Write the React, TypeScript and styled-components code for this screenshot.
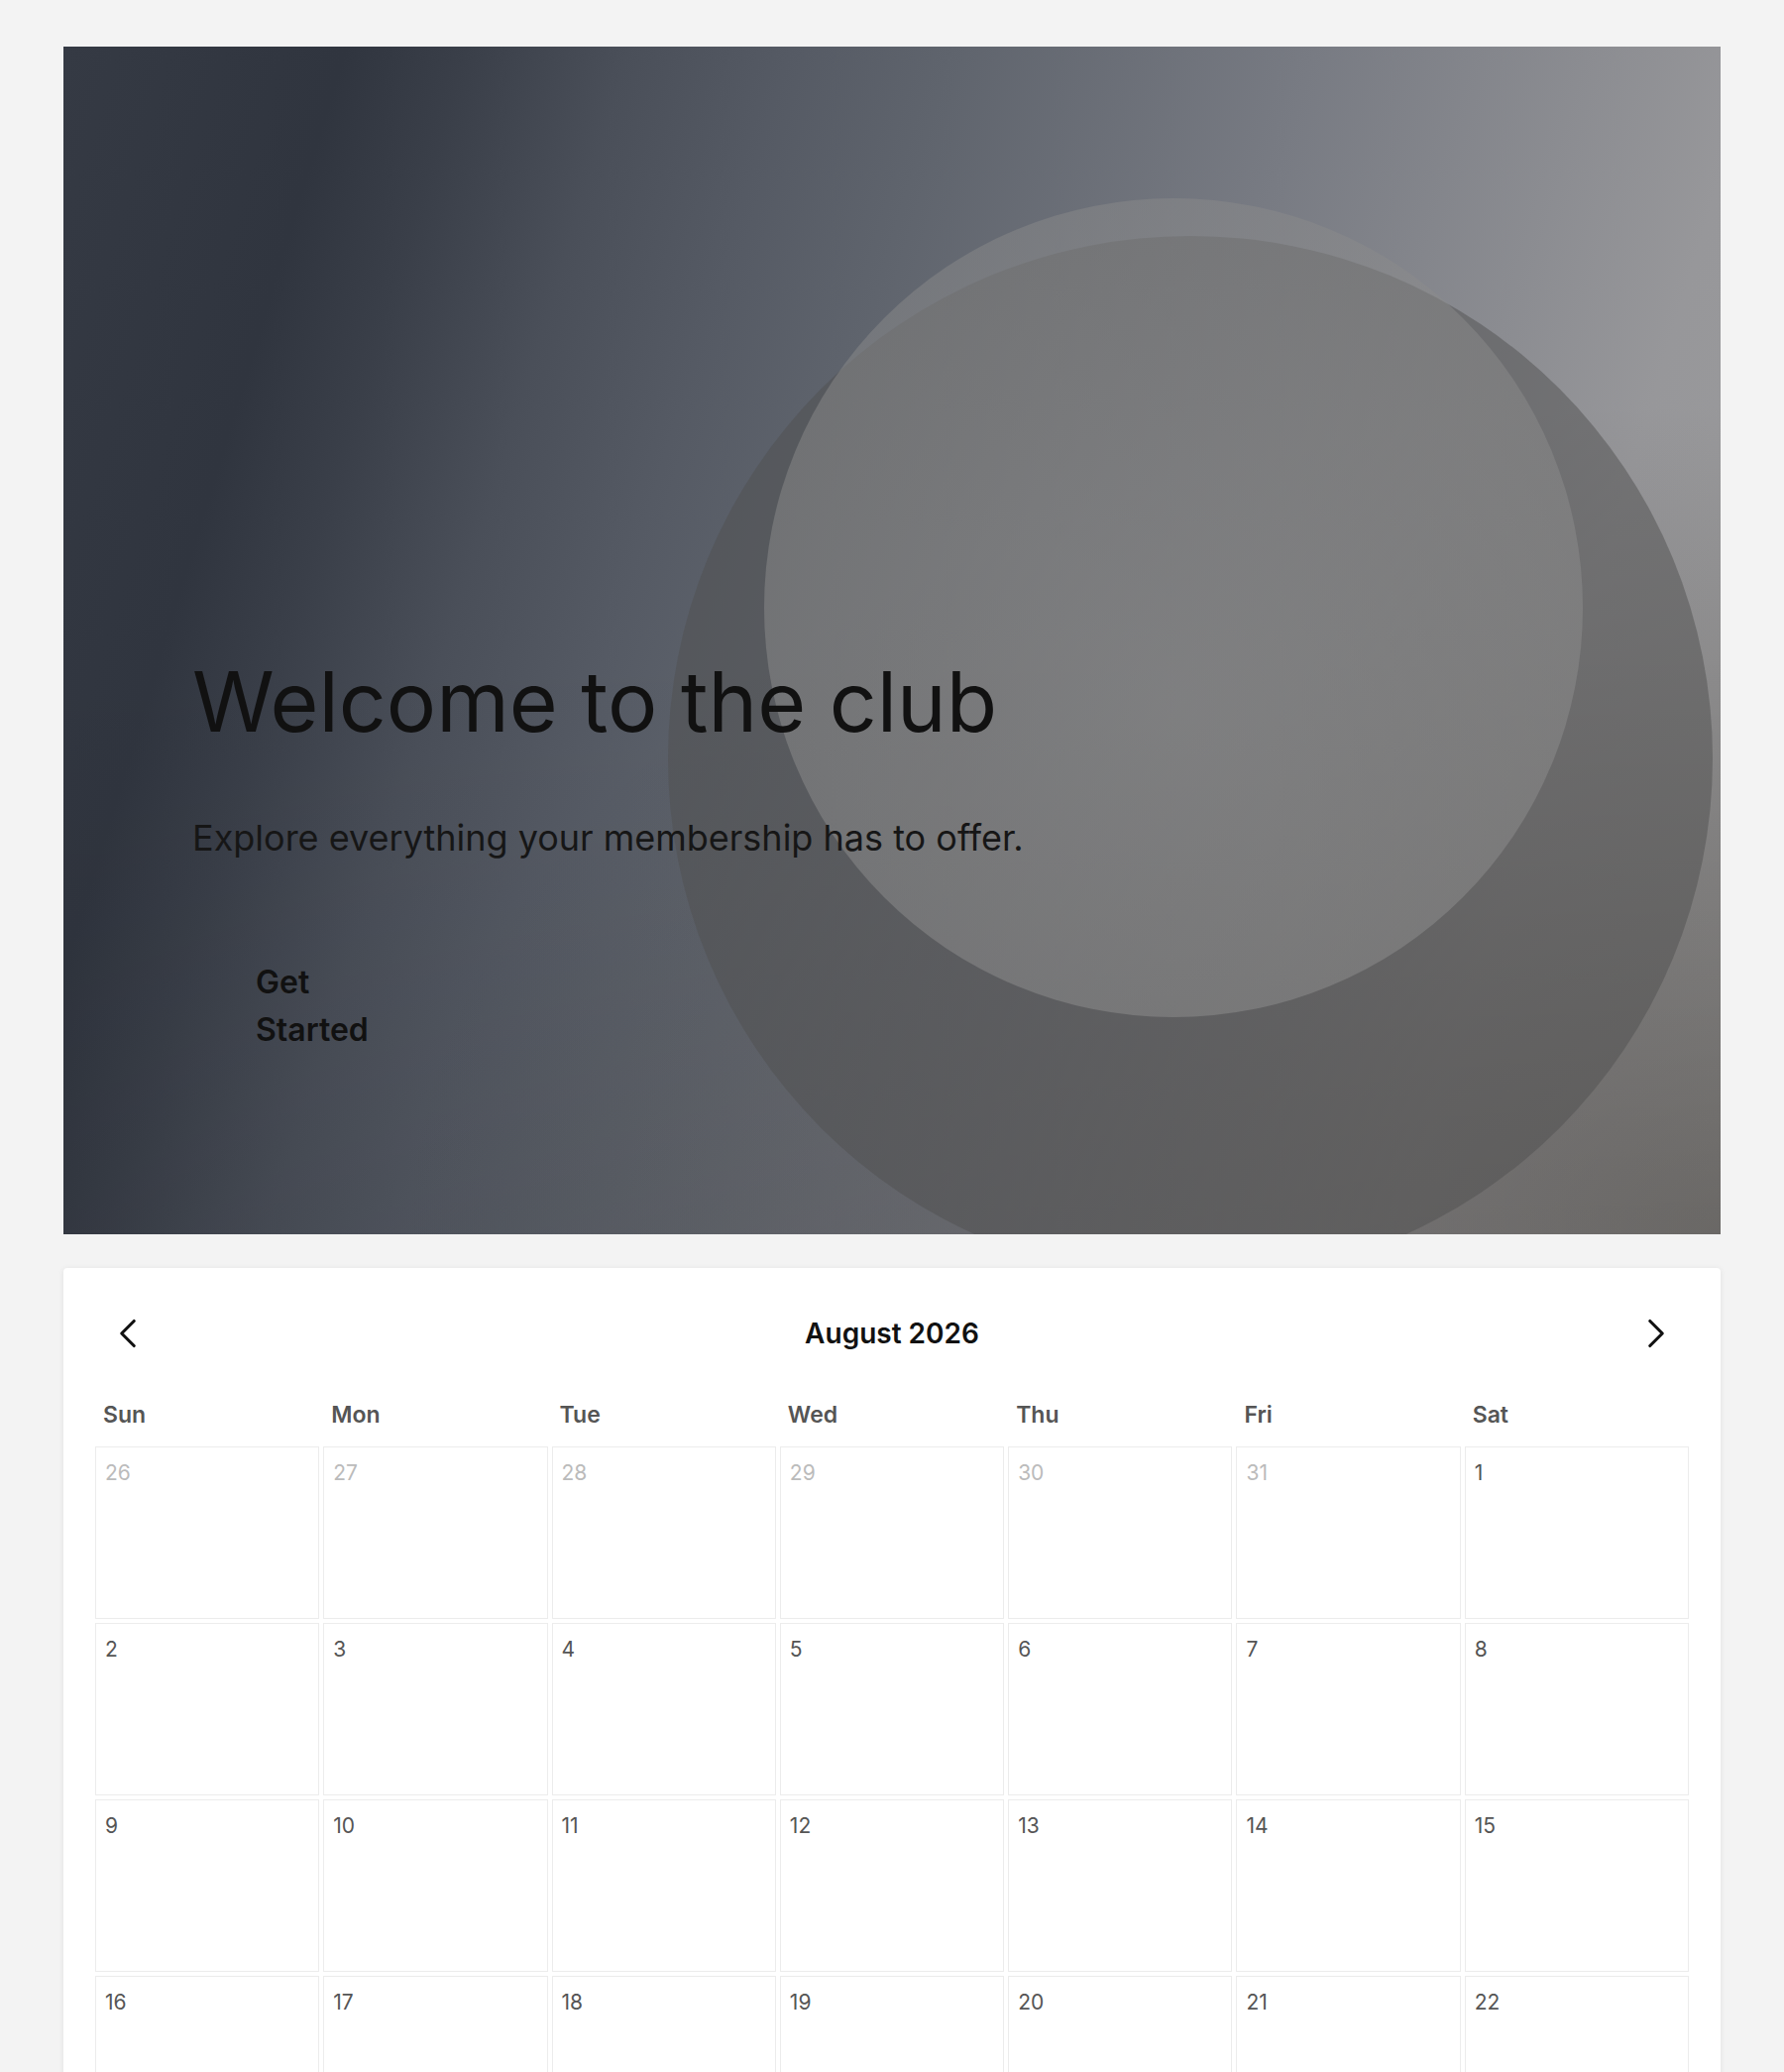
import React from "react";
import styled, { createGlobalStyle } from "styled-components";
import { ChevronLeft, ChevronRight } from "lucide-react";

const GlobalStyle = createGlobalStyle`
  * {
    box-sizing: border-box;
  }
  body {
    margin: 0;
    background: #f3f3f3;
    font-family: Inter, "Noto Sans", sans-serif;
    color: #111;
  }
`;

const Page = styled.main`
  display: flex;
  flex-direction: column;
  gap: 34px;
  padding: 47px 64px 64px;
`;

// hero banner with the two decorative circles behind the text
const Hero = styled.section`
  position: relative;
  overflow: hidden;
  height: 1198px;
  display: flex;
  flex-direction: column;
  justify-content: flex-end;
  padding: 0 130px 158px;
  background:
    radial-gradient(ellipse 80% 70% at 100% 100%, rgba(60, 55, 50, 0.45) 0%, rgba(60, 55, 50, 0) 100%),
    linear-gradient(to bottom, rgba(0, 0, 0, 0) 50%, rgba(0, 0, 0, 0.08) 100%),
    linear-gradient(
      107deg,
      #353a44 0%,
      #323741 8%,
      #30353f 14%,
      #3a3f49 20%,
      #4a4f59 28%,
      #555a64 36%,
      #5f646d 44%,
      #787b83 62%,
      #97979a 84%,
      #9c9c9c 100%
    );
`;

const Circle = styled.div<{ $size: number; $left: number; $top: number; $bg: string }>`
  position: absolute;
  left: ${(p) => p.$left}px;
  top: ${(p) => p.$top}px;
  width: ${(p) => p.$size}px;
  height: ${(p) => p.$size}px;
  border-radius: 50%;
  background: ${(p) => p.$bg};
  pointer-events: none;
`;

const HeroContent = styled.div`
  position: relative;
  z-index: 1;
  display: flex;
  flex-direction: column;
  align-items: flex-start;
`;

const Title = styled.h1`
  margin: 0;
  font-size: 84px;
  font-weight: 400;
  line-height: 1.1;
  color: #111;
`;

const Subtitle = styled.p`
  margin: 64px 0 0;
  font-size: 36px;
  line-height: 1.5;
  color: #161616;
`;

const CtaButton = styled.button`
  margin-top: 71px;
  width: min-content;
  padding: 24px 64px;
  border: none;
  background: transparent;
  font-family: inherit;
  font-size: 32px;
  font-weight: 600;
  line-height: 48px;
  color: #111;
  text-align: left;
  cursor: pointer;
`;

// calendar card
const Card = styled.section`
  background: #fff;
  border-radius: 4px;
  box-shadow: 0 1px 6px rgba(0, 0, 0, 0.08);
  padding: 33px 32px 32px;
`;

const CalendarHeader = styled.div`
  display: flex;
  align-items: center;
  justify-content: space-between;
  margin-bottom: 23px;
`;

const NavButton = styled.button`
  display: flex;
  align-items: center;
  justify-content: center;
  padding: 8px;
  border: none;
  background: none;
  color: #111;
  cursor: pointer;
`;

const MonthTitle = styled.h2`
  margin: 0;
  font-size: 28px;
  font-weight: 600;
  color: #111;
`;

const WeekRow = styled.div`
  display: grid;
  grid-template-columns: repeat(7, 1fr);
  gap: 4px;
`;

const Weekday = styled.div`
  padding: 8px;
  font-size: 23px;
  font-weight: 600;
  line-height: 36px;
  color: #555;
`;

const DaysGrid = styled.div`
  display: grid;
  grid-template-columns: repeat(7, 1fr);
  gap: 4px;
  margin-top: 6px;
`;

const DayCell = styled.div<{ $muted?: boolean }>`
  height: 174px;
  border: 1px solid #ececec;
  padding: 10px 9px;
  font-size: 21px;
  line-height: 1.5;
  color: ${(p) => (p.$muted ? "#bbb" : "#555")};
`;

const weekdays = ["Sun", "Mon", "Tue", "Wed", "Thu", "Fri", "Sat"];

// august 2026 starts on a saturday, pad with the end of july and start of september
function buildDays() {
  const days: { n: number; muted: boolean }[] = [];
  for (let d = 26; d <= 31; d++) days.push({ n: d, muted: true });
  for (let d = 1; d <= 31; d++) days.push({ n: d, muted: false });
  let next = 1;
  while (days.length % 7 !== 0) days.push({ n: next++, muted: true });
  return days;
}

function App() {
  const days = buildDays();

  return (
    <>
      <GlobalStyle />
      <Page>
        <Hero>
          <Circle $size={1054} $left={610} $top={191} $bg="rgba(80, 80, 80, 0.5)" />
          <Circle
            $size={826}
            $left={707}
            $top={153}
            $bg="radial-gradient(circle at 50% 62%, rgba(150, 150, 150, 0.55) 0%, rgba(142, 142, 142, 0.5) 60%, rgba(135, 135, 135, 0.46) 100%)"
          />
          <HeroContent>
            <Title>Welcome to the club</Title>
            <Subtitle>Explore everything your membership has to offer.</Subtitle>
            <CtaButton>Get Started</CtaButton>
          </HeroContent>
        </Hero>

        <Card>
          <CalendarHeader>
            <NavButton aria-label="Previous month">
              <ChevronLeft size={50} strokeWidth={1.5} />
            </NavButton>
            <MonthTitle>August 2026</MonthTitle>
            <NavButton aria-label="Next month">
              <ChevronRight size={50} strokeWidth={1.5} />
            </NavButton>
          </CalendarHeader>
          <WeekRow>
            {weekdays.map((w) => (
              <Weekday key={w}>{w}</Weekday>
            ))}
          </WeekRow>
          <DaysGrid>
            {days.map((d, i) => (
              <DayCell key={i} $muted={d.muted}>
                {d.n}
              </DayCell>
            ))}
          </DaysGrid>
        </Card>
      </Page>
    </>
  );
}

export default App;
